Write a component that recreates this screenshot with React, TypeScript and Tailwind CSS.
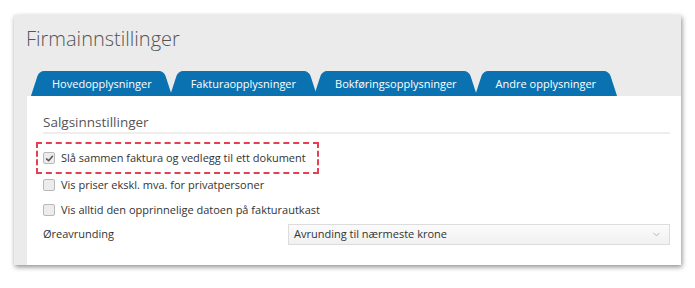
import { ChevronDown } from "lucide-react";

const tabs = [
  "Hovedopplysninger",
  "Fakturaopplysninger",
  "Bokføringsopplysninger",
  "Andre opplysninger",
];

type BoxProps = {
  checked?: boolean;
};

function CheckBox({ checked }: BoxProps) {
  return (
    <span className="flex h-[12px] w-[12px] shrink-0 items-center justify-center rounded-[2px] border border-[#b9b9b9] bg-[#ececec]">
      {checked && (
        <svg viewBox="0 0 12 12" className="h-[9px] w-[9px]">
          <path
            d="M2 6.5 L4.8 9 L10 3"
            fill="none"
            stroke="#555"
            strokeWidth="2"
            strokeLinecap="round"
            strokeLinejoin="round"
          />
        </svg>
      )}
    </span>
  );
}

function Tab({ label }: { label: string }) {
  return (
    <div className="relative isolate flex h-[25px] items-center whitespace-nowrap px-[17px] text-[11px] leading-[25px] text-white before:absolute before:inset-y-0 before:left-0 before:right-[40%] before:-z-10 before:-skew-x-[18deg] before:rounded-tl-[5px] before:bg-[#0b72b1] after:absolute after:inset-y-0 after:left-[40%] after:right-0 after:-z-10 after:skew-x-[18deg] after:rounded-tr-[5px] after:bg-[#0b72b1]">
      {label}
    </div>
  );
}

export default function App() {
  return (
    <div className="h-[288px] w-[695px] bg-white pl-[14px] pt-[15px] font-['Open_Sans',sans-serif]">
      <div className="flex h-[250px] w-[667px] flex-col bg-[#ebebeb] shadow-[1px_2px_5px_rgba(0,0,0,0.45)]">
        <h1 className="pl-[12px] pt-[10px] text-[20px] font-light leading-[28px] text-[#555]">
          Firmainnstillinger
        </h1>

        <div className="ml-[21px] mt-[18px] flex gap-[5px]">
          {tabs.map((t) => (
            <Tab key={t} label={t} />
          ))}
        </div>

        <div className="ml-[13px] flex-1 whitespace-nowrap bg-white pl-[16px] pr-[11px] pt-[16px] text-[11px] text-[#333]">
          <h2 className="border-b-2 border-[#eeeeee] text-[13.5px] leading-[20px] text-[#555]">
            Salgsinnstillinger
          </h2>

          <div className="-ml-[7px] mt-[8px] flex h-[32px] w-[283px] items-center gap-[6px] border-2 border-dashed border-[#e5404f] pl-[5px]">
            <CheckBox checked />
            <span>Slå sammen faktura og vedlegg til ett dokument</span>
          </div>

          <div className="flex h-[22px] items-center gap-[6px]">
            <CheckBox />
            <span>Vis priser ekskl. mva. for privatpersoner</span>
          </div>

          <div className="mt-[3px] flex h-[22px] items-center gap-[6px]">
            <CheckBox />
            <span>Vis alltid den opprinnelige datoen på fakturautkast</span>
          </div>

          <div className="mt-[3px] flex h-[21px] items-center">
            <span className="w-[245px] shrink-0">Øreavrunding</span>
            <div className="flex h-[21px] flex-1 items-center justify-between border border-[#dcdcdc] bg-gradient-to-b from-[#fbfbfb] to-[#f1f1f1] pl-[5px] pr-[7px]">
              <span>Avrunding til nærmeste krone</span>
              <ChevronDown size={11} strokeWidth={1.5} color="#999" />
            </div>
          </div>
        </div>
      </div>
    </div>
  );
}
